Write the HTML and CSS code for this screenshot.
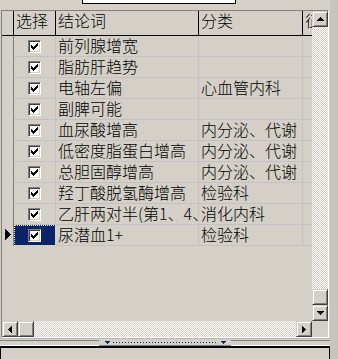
FILE: index.html
```html
<!DOCTYPE html>
<html>
<head>
<meta charset="utf-8">
<link rel="stylesheet" href="styles.css">
</head>
<body>
<div class="window">
  <div class="main">
    <div class="topbar"><div class="edit"></div></div>
    <div class="grid">
      <div class="grid-body">
        <div class="table">
          <div class="row head">
            <div class="cell ind"></div>
            <div class="cell c1">选择</div>
            <div class="cell c2">结论词</div>
            <div class="cell c3">分类</div>
            <div class="cell c4">征</div>
          </div>
          <div class="row data"><div class="cell ind"></div><div class="cell c1"><span class="chk"><svg width="7" height="7" viewBox="0 0 7 7"><path d="M6 0h1v3h-1v1h-1v1h-1v1h-1v1h-1v-1h-1v-1h-1v-3h1v1h1v1h1v-1h1v-1h1v-1h1z"/></svg></span></div><div class="cell c2">前列腺增宽</div><div class="cell c3"></div><div class="cell c4"></div></div>
          <div class="row data"><div class="cell ind"></div><div class="cell c1"><span class="chk"><svg width="7" height="7" viewBox="0 0 7 7"><path d="M6 0h1v3h-1v1h-1v1h-1v1h-1v1h-1v-1h-1v-1h-1v-3h1v1h1v1h1v-1h1v-1h1v-1h1z"/></svg></span></div><div class="cell c2">脂肪肝趋势</div><div class="cell c3"></div><div class="cell c4"></div></div>
          <div class="row data"><div class="cell ind"></div><div class="cell c1"><span class="chk"><svg width="7" height="7" viewBox="0 0 7 7"><path d="M6 0h1v3h-1v1h-1v1h-1v1h-1v1h-1v-1h-1v-1h-1v-3h1v1h1v1h1v-1h1v-1h1v-1h1z"/></svg></span></div><div class="cell c2">电轴左偏</div><div class="cell c3">心血管内科</div><div class="cell c4"></div></div>
          <div class="row data"><div class="cell ind"></div><div class="cell c1"><span class="chk"><svg width="7" height="7" viewBox="0 0 7 7"><path d="M6 0h1v3h-1v1h-1v1h-1v1h-1v1h-1v-1h-1v-1h-1v-3h1v1h1v1h1v-1h1v-1h1v-1h1z"/></svg></span></div><div class="cell c2">副脾可能</div><div class="cell c3"></div><div class="cell c4"></div></div>
          <div class="row data"><div class="cell ind"></div><div class="cell c1"><span class="chk"><svg width="7" height="7" viewBox="0 0 7 7"><path d="M6 0h1v3h-1v1h-1v1h-1v1h-1v1h-1v-1h-1v-1h-1v-3h1v1h1v1h1v-1h1v-1h1v-1h1z"/></svg></span></div><div class="cell c2">血尿酸增高</div><div class="cell c3">内分泌、代谢</div><div class="cell c4"></div></div>
          <div class="row data"><div class="cell ind"></div><div class="cell c1"><span class="chk"><svg width="7" height="7" viewBox="0 0 7 7"><path d="M6 0h1v3h-1v1h-1v1h-1v1h-1v1h-1v-1h-1v-1h-1v-3h1v1h1v1h1v-1h1v-1h1v-1h1z"/></svg></span></div><div class="cell c2">低密度脂蛋白增高</div><div class="cell c3">内分泌、代谢</div><div class="cell c4"></div></div>
          <div class="row data"><div class="cell ind"></div><div class="cell c1"><span class="chk"><svg width="7" height="7" viewBox="0 0 7 7"><path d="M6 0h1v3h-1v1h-1v1h-1v1h-1v1h-1v-1h-1v-1h-1v-3h1v1h1v1h1v-1h1v-1h1v-1h1z"/></svg></span></div><div class="cell c2">总胆固醇增高</div><div class="cell c3">内分泌、代谢</div><div class="cell c4"></div></div>
          <div class="row data"><div class="cell ind"></div><div class="cell c1"><span class="chk"><svg width="7" height="7" viewBox="0 0 7 7"><path d="M6 0h1v3h-1v1h-1v1h-1v1h-1v1h-1v-1h-1v-1h-1v-3h1v1h1v1h1v-1h1v-1h1v-1h1z"/></svg></span></div><div class="cell c2">羟丁酸脱氢酶增高</div><div class="cell c3">检验科</div><div class="cell c4"></div></div>
          <div class="row data"><div class="cell ind"></div><div class="cell c1"><span class="chk"><svg width="7" height="7" viewBox="0 0 7 7"><path d="M6 0h1v3h-1v1h-1v1h-1v1h-1v1h-1v-1h-1v-1h-1v-3h1v1h1v1h1v-1h1v-1h1v-1h1z"/></svg></span></div><div class="cell c2">乙肝两对半(第1、4、5项阳性)</div><div class="cell c3">消化内科</div><div class="cell c4"></div></div>
          <div class="row data current"><div class="cell ind"><svg class="arrow" width="6" height="11" viewBox="0 0 6 11"><path d="M0 0h1v1h1v1h1v1h1v1h1v1h1v1h-1v1h-1v1h-1v1h-1v1h-1v1h-1z"/></svg></div><div class="cell c1 selected"><span class="chk"><svg width="7" height="7" viewBox="0 0 7 7"><path d="M6 0h1v3h-1v1h-1v1h-1v1h-1v1h-1v-1h-1v-1h-1v-3h1v1h1v1h1v-1h1v-1h1v-1h1z"/></svg></span></div><div class="cell c2">尿潜血1+</div><div class="cell c3">检验科</div><div class="cell c4"></div></div>
        </div>
        <div class="vscroll">
          <div class="btn"><svg width="7" height="4" viewBox="0 0 7 4"><path d="M3 0h1v1h1v1h1v1h1v1H0V3h1V2h1V1h1z"/></svg></div>
          <div class="track"></div>
          <div class="btn"></div>
          <div class="btn"><svg width="7" height="4" viewBox="0 0 7 4"><path d="M0 0h7v1h-1v1h-1v1h-1v1h-1v-1h-1v-1h-1v-1h-1z"/></svg></div>
        </div>
      </div>
      <div class="hscroll-row">
        <div class="hscroll">
          <div class="btn"><svg width="4" height="7" viewBox="0 0 4 7"><path d="M3 0h1v7h-1v-1h-1v-1h-1v-1h-1v-1h1v-1h1v-1h1z"/></svg></div>
          <div class="btn"></div>
          <div class="track"></div>
          <div class="btn"><svg width="4" height="7" viewBox="0 0 4 7"><path d="M0 0h1v1h1v1h1v1h1v1h-1v1h-1v1h-1v1h-1z"/></svg></div>
        </div>
        <div class="corner"></div>
      </div>
    </div>
    <div class="splitter">
      <div class="sp-side"></div>
      <div class="sp-mid">
        <svg class="tri" width="5" height="3" viewBox="0 0 5 3"><path d="M0 0h5v1h-1v1h-1v1h-1v-1h-1v-1h-1z"/></svg>
        <div class="dots"></div>
        <svg class="tri" width="5" height="3" viewBox="0 0 5 3"><path d="M0 0h5v1h-1v1h-1v1h-1v-1h-1v-1h-1z"/></svg>
      </div>
      <div class="sp-side grow"></div>
    </div>
    <div class="bottom"></div>
  </div>
  <div class="side"></div>
</div>
</body>
</html>
```

FILE: styles.css
```css
* { box-sizing: border-box; }
html, body { margin: 0; padding: 0; }
body {
  width: 338px;
  height: 359px;
  overflow: hidden;
  background: #d4d0c8;
  font-family: "Noto Sans CJK SC", "Noto Sans", sans-serif;
}
svg { display: block; shape-rendering: crispEdges; }
.window { display: flex; width: 338px; height: 359px; }
.main { width: 330px; display: flex; flex-direction: column; }
.side { flex: 1; background: #c8c5bf; }

.topbar { height: 10px; }
.edit {
  margin-left: 82px;
  width: 154px;
  height: 4px;
  background: #fff;
  border: 1px solid #000;
  border-top: 0;
}

.grid {
  margin-left: 1px;
  width: 328px;
  height: 328px;
  border-left: 1px solid #808080;
  border-top: 1px solid #808080;
  border-right: 1px solid #fff;
  border-bottom: 1px solid #fff;
  display: flex;
  flex-direction: column;
}
.grid-body { display: flex; height: 310px; }
.table { width: 310px; height: 310px; overflow: hidden; }

.row { display: flex; height: 21px; }
.row.head { height: 25px; border-bottom: 1px solid #000; }
.cell {
  flex: none;
  overflow: hidden;
  white-space: nowrap;
  font-size: 16px;
  font-weight: 300;
  line-height: 18px;
  padding-left: 2px;
  color: #000;
}
.ind { width: 12px; padding: 0; border-right: 1px solid #808080; }
.head .ind { border-right-color: #000; }
.c1 { width: 42px; }
.c2 { width: 143px; }
.c3 { width: 104px; }
.c4 { width: 100px; }
.head .cell { border-right: 1px solid #000; }
.data .c1, .data .c2, .data .c3, .data .c4 {
  border-right: 1px solid #c4c0c8;
  border-bottom: 1px solid #c4c0c8;
}
.data .c1 { display: flex; justify-content: center; padding: 4px 0 0 0; }
.data .c1.selected {
  background: #0a246a;
  outline: 1px dotted #e4e8a8;
  outline-offset: -1px;
}
.arrow { margin: 4px 0 0 3px; }

.chk {
  display: block;
  width: 13px;
  height: 13px;
  background: #fff;
  border: 1px solid;
  border-color: #808080 #fff #fff #808080;
  box-shadow: inset 1px 1px 0 #404040, inset -1px -1px 0 #d4d0c8;
  padding: 2px 0 0 2px;
}

.vscroll { width: 16px; display: flex; flex-direction: column; }
.btn {
  flex: none;
  width: 16px;
  height: 16px;
  background: #d4d0c8;
  border: 1px solid;
  border-color: #d4d0c8 #404040 #404040 #d4d0c8;
  box-shadow: inset 1px 1px 0 #fff, inset -1px -1px 0 #808080;
  display: flex;
  align-items: center;
  justify-content: center;
}
.track {
  flex: 1;
  background: repeating-conic-gradient(#fff 0% 25%, #d4d0c8 0% 50%) 0 0 / 2px 2px;
}
.hscroll-row { display: flex; height: 16px; }
.hscroll { width: 310px; display: flex; }
.corner { width: 16px; }

.splitter {
  height: 8px;
  display: flex;
  border-top: 1px solid #bcb8b2;
}
.sp-side { width: 99px; border-top: 1px solid #808080; margin-top: 1px; border-bottom: 1px solid #fff; }
.sp-side.grow { flex: 1; width: auto; }
.sp-mid {
  width: 132px;
  display: flex;
  align-items: center;
  gap: 3px;
  padding: 0 5px 0 6px;
  border-bottom: 1px solid #808080;
}
.dots {
  flex: 1;
  height: 1px;
  background: repeating-linear-gradient(to right, #0a246a 0 1px, transparent 1px 3px);
}
.tri path, .dots { fill: #0a246a; }

.bottom {
  flex: 1;
  border-top: 2px solid #000;
  border-left: 1px solid #000;
  border-right: 1px solid #000;
}
```
